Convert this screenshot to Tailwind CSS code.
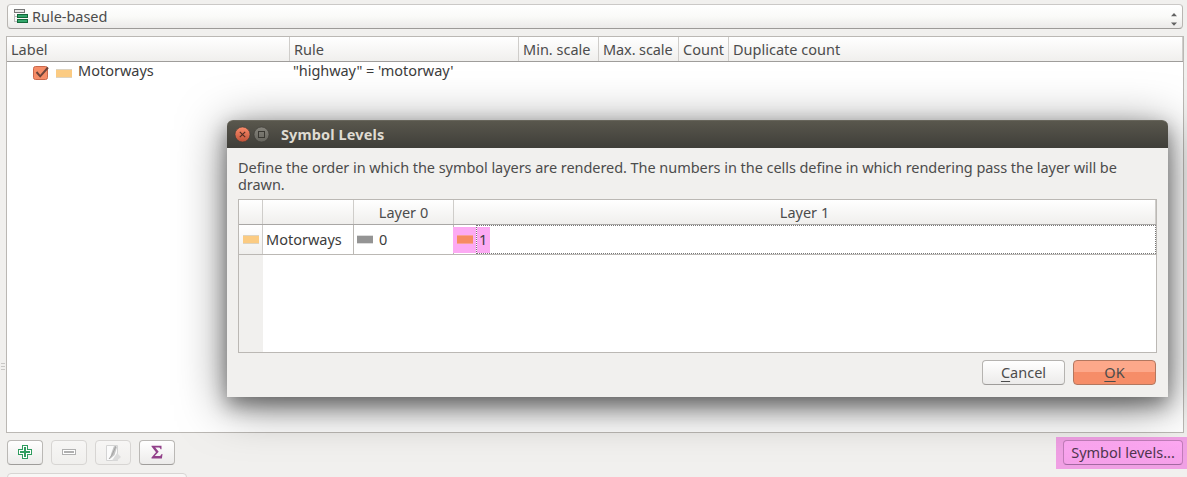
<!DOCTYPE html>
<html lang="en">
<head>
<meta charset="utf-8">
<title>Symbol Levels</title>
<script src="https://cdn.jsdelivr.net/npm/@tailwindcss/browser@4"></script>
</head>
<body class="relative h-[477px] w-[1187px] overflow-hidden bg-[#f1f0ee] font-['Noto_Sans','Open_Sans',sans-serif] text-[14.5px] leading-[17px] text-[#4c4c4c]">
<main class="flex h-[477px] flex-col overflow-hidden pt-1">
  <div class="ml-[7px] flex h-[25px] w-[1176px] shrink-0 items-center rounded-[4px] border border-[#b9b6b2] border-t-[#cbc9c7] border-b-[#9c9a98] bg-linear-to-b from-white via-[#fafaf8] to-[#ebeae9] pr-[5px] pl-[6px]">
    <svg class="shrink-0" width="16" height="16" viewBox="0 0 16 16" shape-rendering="crispEdges"><path d="M.5 5v8M1 7.500h2M1 12.500h2" stroke="#bbb" fill="none"/><rect x=".5" y=".5" width="10" height="3" fill="#e6e6e6" stroke="#777"/><rect x="3.500" y="5.500" width="10" height="3" fill="#33a66b" stroke="#12683a"/><rect x="3.500" y="10.500" width="10" height="3" fill="#33a66b" stroke="#12683a"/></svg>
    <span class="ml-[2px] whitespace-nowrap tracking-[-0.03px]">Rule-based</span>
    <svg class="mt-[5px] ml-auto" width="6" height="13" viewBox="0 0 6 13"><path d="M0 3.300L3 0l3 3.300zM0 9.500h6L3 12.700z" fill="#626262"/></svg>
  </div>
  <div class="mt-[7px] flex">
    <div class="flex w-[6px] shrink-0 flex-col justify-end gap-[2px] pr-[1px] pb-[63px] pl-[1px]"><i class="h-px bg-[#c9c8c6]"></i><i class="h-px bg-[#c9c8c6]"></i><i class="h-px bg-[#c9c8c6]"></i></div>
    <section class="h-[397px] w-[1178px] border border-[#bbb8b4] bg-white">
      <div class="grid h-[25px] grid-cols-[283px_229px_80px_80px_50px_454px] border-b border-[#9f9d9b] bg-linear-to-b from-white to-[#f0efed] whitespace-nowrap *:border-r *:border-[#cfcdca] *:pt-[4px] *:pl-[4px]">
        <div>Label</div><div>Rule</div><div>Min. scale</div><div class="tracking-[-0.1px]">Max. scale</div><div>Count</div><div>Duplicate count</div>
      </div>
      <div class="grid h-[18px] grid-cols-[283px_893px] whitespace-nowrap text-[#3c3c3c]">
        <div class="flex h-[18px] items-start pl-[26px]">
          <svg class="mt-[3px]" width="17" height="16" viewBox="0 0 17 16"><rect x=".5" y="1.500" width="14" height="13" rx="2" fill="#f68d68" stroke="#c9674b"/><path d="M3.500 7l3.700 4.300L15 2.500" fill="none" stroke="#6d453b" stroke-width="2"/></svg>
          <i class="mt-[7px] ml-[6px] h-[9px] w-[16px] border-y border-[#ddd3c0] bg-[#fbcb82]"></i>
          <span class="ml-[6px]">Motorways</span>
        </div>
        <div class="pl-[3px] tracking-[-0.06px]">"highway" = 'motorway'</div>
      </div>
    </section>
  </div>
  <div class="mt-[4px] flex h-[32px] items-start pl-[7px]">
    <div class="mt-[3px] flex gap-[8px] *:flex *:h-[25px] *:w-[36px] *:items-center *:justify-center *:rounded-[4px] *:border *:bg-linear-to-b">
      <button class="border-[#bab8b5] border-b-[#9f9d9b] from-white to-[#ecebea]"><svg class="-mt-px" width="14" height="14" viewBox="0 0 14 14" shape-rendering="crispEdges"><path d="M4.500.5h5v4h4v5h-4v4h-5v-4h-4v-5h4z" fill="#fff" stroke="#2f9c5f"/><path d="M6 2h2v4h4v2H8v4H6V8H2V6h4z" fill="#2f9c5f"/></svg></button>
      <button class="border-[#d7d5d3] from-[#f7f6f5] to-[#f0efed]"><svg class="-mt-px" width="14" height="6" viewBox="0 0 14 6" shape-rendering="crispEdges"><rect x=".5" y=".5" width="13" height="5" fill="#fff" stroke="#b0b0b0"/><path d="M2 3h10" stroke="#b0b0b0" stroke-width="2"/></svg></button>
      <button class="border-[#d7d5d3] from-[#f7f6f5] to-[#f0efed]"><svg width="16" height="16" viewBox="0 0 16 16"><path d="M1.500.5h11v15h-11z" fill="#fbfbfb" stroke="#d4d4d4"/><path d="M12 8l4 4-4 3.500H7z" fill="#dcdcdc"/><path d="M9 1l3 1-2.500 8-4.500 4 1-5z" fill="#c2c2c2"/><path d="M4 14l3-4 4-9" stroke="#a4a4a4" fill="none"/></svg></button>
      <button class="border-[#bab8b5] border-b-[#9f9d9b] from-white to-[#ecebea]"><svg class="-mt-px" width="12" height="14" viewBox="0 0 12 14"><path d="M.5.7h10v3.500h-1c-.2-1.200-.7-1.700-2-1.700H4.200l3.500 4.200L3.700 11H8c1.400 0 2-.6 2.500-2h1l-.6 4.500H.5v-1L5 7.200.5 1.600z" fill="#92418a"/></svg></button>
    </div>
    <div class="ml-auto flex h-[32px] w-[131px] items-start bg-[#f0a0e4] pt-[3px] pl-[7px]"><button class="flex h-[25px] w-[120px] items-center justify-center rounded-[4px] border border-[#c27dba] border-b-[#a269a0] bg-linear-to-b from-[#ffa9f4] to-[#f5a0e9] whitespace-nowrap text-[#50364f]">Symbol levels...</button></div>
  </div>
  <div class="mt-[4px] ml-[7px] h-[20px] w-[180px] shrink-0 rounded-[4px] border border-[#d7d5d3] bg-[#f8f7f6]"></div>
</main>

<section class="absolute top-[120px] left-[227px] flex h-[277px] w-[941px] flex-col rounded-t-[6px] bg-[#f1f0ee] shadow-[0_8px_20px_rgba(0,0,0,0.4),0_8px_48px_rgba(0,0,0,0.5)]">
  <header class="flex h-[28px] shrink-0 items-center rounded-t-[6px] border-t border-[#67655b] bg-linear-to-b from-[#59574d] to-[#3f3e39] pl-[7px] text-[#dfdbd2]">
    <svg width="36" height="18" viewBox="0 0 36 18"><defs><linearGradient id="r" x2="0" y2="1"><stop stop-color="#fb8c6b"/><stop offset="1" stop-color="#bf5238"/></linearGradient><linearGradient id="g" x2="0" y2="1"><stop stop-color="#85837b"/><stop offset="1" stop-color="#66655e"/></linearGradient></defs><circle cx="8.500" cy="8.500" r="7.500" fill="url(#r)" stroke="#3a3934" stroke-width=".6"/><path d="M5.800 5.800l5.400 5.400m0-5.400l-5.400 5.400" stroke="#4f2c22" stroke-width="1.100"/><circle cx="27.500" cy="8.500" r="7.500" fill="url(#g)" stroke="#3a3934" stroke-width=".6"/><rect x="24.500" y="5.500" width="6" height="6" fill="none" stroke="#393832"/></svg>
    <span class="ml-[11px] font-bold whitespace-nowrap tracking-[0.12px]">Symbol Levels</span>
  </header>
  <p class="mt-[11px] ml-[11px] whitespace-nowrap tracking-[-0.053px]">Define the order in which the symbol layers are rendered. The numbers in the cells define in which rendering pass the layer will be<br>drawn.</p>
  <div class="mt-[6px] ml-[11px] h-[154px] w-[919px] shrink-0 border border-[#bbb8b4] bg-linear-to-r from-[#f1f0ee] from-[24px] to-white to-[24px]">
    <div class="grid h-[25px] grid-cols-[24px_91px_100px_702px] border-b border-[#a9a7a5] bg-linear-to-b from-white to-[#f0efed] text-center whitespace-nowrap *:border-r *:border-[#cfcdca] *:pt-[4px]"><div></div><div></div><div>Layer 0</div><div>Layer 1</div></div>
    <div class="grid h-[30px] grid-cols-[24px_91px_100px_702px] border-b border-[#bbb8b4] bg-white whitespace-nowrap text-[#3c3c3c] *:flex *:items-center">
      <div class="border-r border-[#cfcdca] bg-linear-to-b from-white to-[#f0efed] pl-[4px]"><i class="h-[9px] w-[16px] border-y border-[#ddd3c0] bg-[#fbcb82]"></i></div>
      <div class="border-r border-[#bbb8b4] pl-[3px]">Motorways</div>
      <div class="border-r border-[#bbb8b4] pl-[3px]"><i class="h-[9px] w-[16px] border-y border-[#ddd] bg-[#949494]"></i><span class="ml-[6px]">0</span></div>
      <div class="-ml-px"><div class="flex h-[26px] w-[23px] items-center bg-[#fcaaf3] pl-[4px]"><i class="h-[9px] w-[16px] border-y border-[#f9a197] bg-[#f68b62]"></i></div><div class="flex h-[29px] flex-1 items-center border border-dotted border-[#777]"><span class="flex h-[26px] w-[13px] items-center bg-[#fcaaf3] pl-[2px]">1</span></div></div>
    </div>
  </div>
  <div class="mt-[7px] flex justify-end gap-[8px] pr-[12px] *:h-[25px] *:w-[83px] *:rounded-[4px] *:border *:bg-linear-to-b">
    <button class="border-[#b5b3b0] border-b-[#9f9d9b] from-white to-[#ecebea]"><u class="underline-offset-[3px]">C</u>ancel</button>
    <button class="border-[#b3775f] from-[#fda88a] from-50% to-[#f68d68] to-50%"><u class="underline-offset-[3px]">O</u>K</button>
  </div>
</section>
</body>
</html>
